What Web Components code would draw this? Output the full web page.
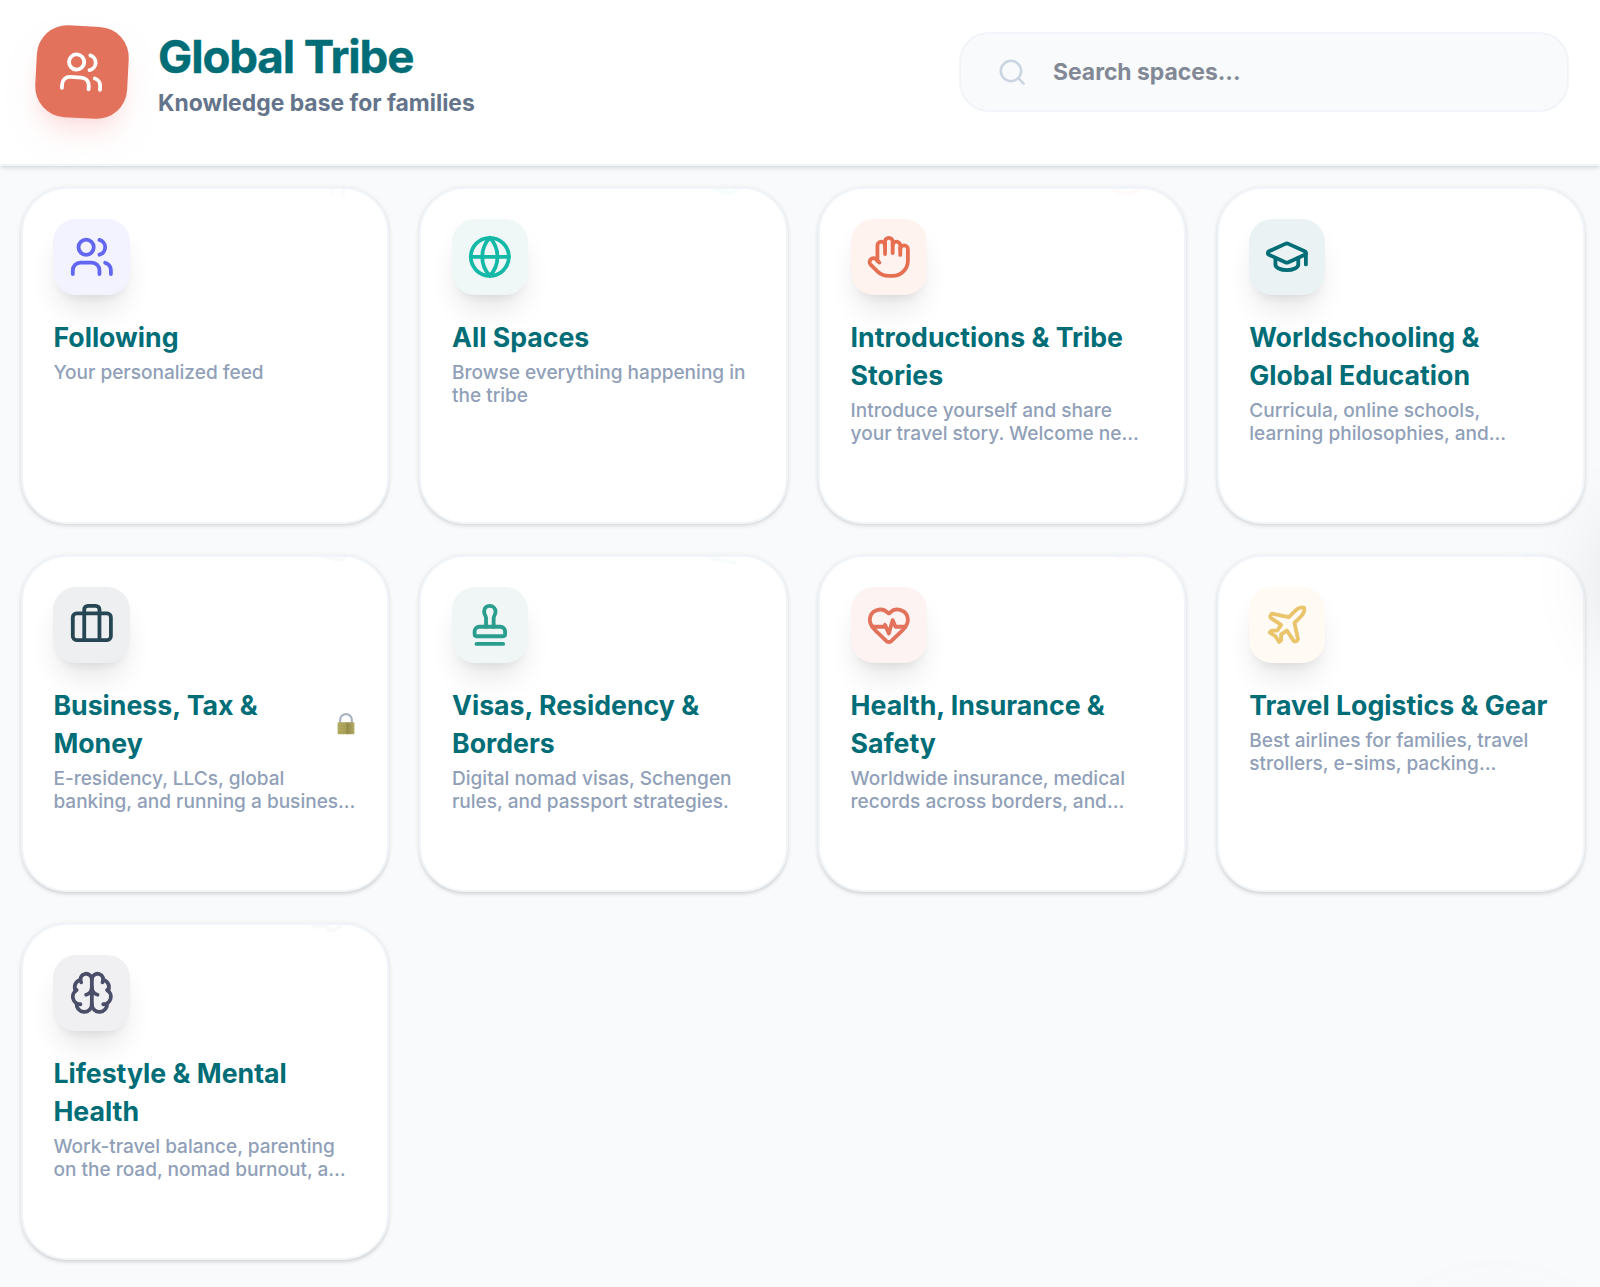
<!DOCTYPE html>
<html lang="en">
<head>
<meta charset="utf-8">
<title>Global Tribe</title>
<style>
  html, body {
    margin: 0;
    height: 100%;
    overflow: hidden;
    background: #f8fafc;
    font-family: Inter, "Liberation Sans", sans-serif;
  }
</style>
</head>
<body>
<tribe-app>
  <tribe-header slot="header" heading="Global Tribe" tagline="Knowledge base for families">
    <search-box>Search spaces...</search-box>
  </tribe-header>

  <space-card icon="users" color="#6366f1" tint="#f3f2ff" heading="Following">Your personalized feed</space-card>
  <space-card icon="globe" color="#14b8a6" tint="#eff8f7" heading="All Spaces">Browse everything happening in the tribe</space-card>
  <space-card icon="hand" color="#e76f51" tint="#fff3f0" heading="Introductions &amp; Tribe Stories">Introduce yourself and share your travel story. Welcome ne…</space-card>
  <space-card icon="cap" color="#006d77" tint="#ebf2f4" heading="Worldschooling &amp; Global Education">Curricula, online schools, learning philosophies, and…</space-card>
  <space-card icon="suitcase" color="#264653" tint="#eeeff1" heading="Business, Tax &amp; Money" locked>E-residency, LLCs, global banking, and running a busines…</space-card>
  <space-card icon="stamp" color="#2a9d8f" tint="#eff6f5" heading="Visas, Residency &amp; Borders">Digital nomad visas, Schengen rules, and passport strategies.</space-card>
  <space-card icon="heart" color="#e2725b" tint="#fcf3f2" heading="Health, Insurance &amp; Safety">Worldwide insurance, medical records across borders, and…</space-card>
  <space-card icon="plane" color="#e9c46a" tint="#fffaf3" heading="Travel Logistics &amp; Gear">Best airlines for families, travel strollers, e-sims, packing…</space-card>
  <space-card icon="brain" color="#4a4e69" tint="#f0f0f2" heading="Lifestyle &amp; Mental Health">Work-travel balance, parenting on the road, nomad burnout, a…</space-card>
</tribe-app>

<script>
const ICONS = {
  users: '<path d="M16 21v-2a4 4 0 0 0-4-4H6a4 4 0 0 0-4 4v2"/><circle cx="9" cy="7" r="4"/><path d="M22 21v-2a4 4 0 0 0-3-3.87"/><path d="M16 3.13a4 4 0 0 1 0 7.75"/>',
  globe: '<circle cx="12" cy="12" r="10"/><path d="M12 2a14.5 14.5 0 0 0 0 20 14.5 14.5 0 0 0 0-20"/><path d="M2 12h20"/>',
  hand: '<path d="M18 11V6a2 2 0 0 0-2-2a2 2 0 0 0-2 2"/><path d="M14 10V4a2 2 0 0 0-2-2a2 2 0 0 0-2 2v2"/><path d="M10 10.5V6a2 2 0 0 0-2-2a2 2 0 0 0-2 2v8"/><path d="M18 8a2 2 0 1 1 4 0v6a8 8 0 0 1-8 8h-2c-2.8 0-4.5-.86-5.99-2.34l-3.6-3.6a2 2 0 0 1 2.83-2.82L7 15"/>',
  cap: '<path d="M21.42 10.922a1 1 0 0 0-.019-1.838L12.83 5.18a2 2 0 0 0-1.66 0L2.6 9.08a1 1 0 0 0 0 1.832l8.57 3.908a2 2 0 0 0 1.66 0z"/><path d="M22 10v6"/><path d="M6 12.5V16a6 3 0 0 0 12 0v-3.5"/>',
  suitcase: '<path d="M16 20V4a2 2 0 0 0-2-2h-4a2 2 0 0 0-2 2v16"/><rect width="20" height="14" x="2" y="6" rx="2"/>',
  stamp: '<path d="M5 22h14"/><path d="M19.27 13.73A2.5 2.5 0 0 0 17.5 13h-11A2.5 2.5 0 0 0 4 15.5V17a1 1 0 0 0 1 1h14a1 1 0 0 0 1-1v-1.5c0-.66-.26-1.3-.73-1.77Z"/><path d="M14 13V8.5C14 7 15 7 15 5a3 3 0 0 0-3-3c-1.66 0-3 1-3 3s1 2 1 3.5V13"/>',
  heart: '<path d="M2 9.5a5.5 5.5 0 0 1 9.591-3.676.56.56 0 0 0 .818 0A5.49 5.49 0 0 1 22 9.5c0 2.29-1.5 4-3 5.5l-5.492 5.313a2 2 0 0 1-3 .019L5 15c-1.5-1.5-3-3.2-3-5.5"/><path d="M3.22 13H9.5l.5-1 2 4.5 2-7 1.5 3.5h5.27"/>',
  plane: '<path d="M17.8 19.2 16 11l3.5-3.5C21 6 21.5 4 21 3c-1-.5-3 0-4.5 1.5L13 8 4.8 6.2c-.5-.1-.9.1-1.1.5l-.3.5c-.2.5-.1 1 .3 1.3L9 12l-2 3H4l-1 1 3 2 2 3 1-1v-3l3-2 3.5 5.3c.3.4.8.5 1.3.2l.5-.2c.4-.3.6-.7.5-1.2z"/>',
  brain: '<path d="M12 18V5"/><path d="M15 13a4.17 4.17 0 0 1-3-4 4.17 4.17 0 0 1-3 4"/><path d="M17.598 6.5A3 3 0 1 0 12 5a3 3 0 1 0-5.598 1.5"/><path d="M17.997 5.125a4 4 0 0 1 2.526 5.77"/><path d="M18 18a4 4 0 0 0 2-7.464"/><path d="M19.967 17.483A4 4 0 1 1 12 18a4 4 0 1 1-7.967-.517"/><path d="M6 18a4 4 0 0 1-2-7.464"/><path d="M6.003 5.125a4 4 0 0 0-2.526 5.77"/>',
  search: '<circle cx="11" cy="11" r="8"/><path d="m21 21-4.3-4.3"/>'
};

class LineIcon extends HTMLElement {
  constructor() {
    super();
    this.attachShadow({ mode: 'open' });
  }

  connectedCallback() {
    this.shadowRoot.innerHTML = `
      <style>
        :host {
          display: block;
          width: var(--icon-size, 45.7px);
          height: var(--icon-size, 45.7px);
        }

        svg {
          display: block;
          width: 100%;
          height: 100%;
        }
      </style>
      <svg viewBox="0 0 24 24" fill="none" stroke="currentColor" stroke-width="2" stroke-linecap="round" stroke-linejoin="round">${ICONS[this.getAttribute('name')]}</svg>
    `;
  }
}

class SearchBox extends HTMLElement {
  constructor() {
    super();
    this.attachShadow({ mode: 'open' });
  }

  connectedCallback() {
    this.shadowRoot.innerHTML = `
      <style>
        :host {
          display: flex;
          align-items: center;
          gap: 25.5px;
          box-sizing: border-box;
          width: 610px;
          height: 80px;
          padding-left: 36px;
          border: 2px solid #f1f5f9;
          border-radius: 30px;
          background: #f8fafc;
          color: #828895;
          font-size: 22.9px;
          font-weight: 700;
        }

        line-icon {
          --icon-size: 30.5px;
          color: #cbd5e1;
        }
      </style>
      <line-icon name="search"></line-icon>
      <span><slot></slot></span>
    `;
  }
}

class TribeHeader extends HTMLElement {
  constructor() {
    super();
    this.attachShadow({ mode: 'open' });
  }

  connectedCallback() {
    this.shadowRoot.innerHTML = `
      <style>
        :host {
          display: flex;
          align-items: flex-start;
          justify-content: space-between;
          box-sizing: border-box;
          height: 166px;
          padding: 26.4px 31px 0 36px;
          background: #fff;
          border-bottom: 2px solid #f1f5f9;
          box-shadow: 0 1.9px 5.7px rgba(0, 0, 0, .1), 0 1.9px 3.8px -1.9px rgba(0, 0, 0, .1);
        }

        .brand,
        .tools {
          display: flex;
          align-items: center;
          height: 91.5px;
        }

        .brand {
          gap: 30.5px;
        }

        .logo {
          display: grid;
          place-items: center;
          width: 91.5px;
          height: 91.5px;
          border-radius: 30.5px;
          background: #e2725b;
          color: #fff;
          transform: rotate(3deg);
          box-shadow: 0 19px 28.6px -5.7px rgba(254, 202, 202, .5), 0 7.6px 11.4px -7.6px rgba(254, 202, 202, .5);
        }

        .text {
          padding-top: 8px;
        }

        h1 {
          margin: 0;
          color: #006d77;
          font-size: 45.7px;
          line-height: 45.7px;
          font-weight: 700;
          letter-spacing: -1.14px;
          -webkit-text-stroke: .4px #006d77;
        }

        p {
          margin: 7.6px 0 0;
          color: #64748b;
          font-size: 22.9px;
          line-height: 30.5px;
          font-weight: 700;
        }
      </style>
      <div class="brand">
        <div class="logo"><line-icon name="users"></line-icon></div>
        <div class="text">
          <h1>${this.getAttribute('heading')}</h1>
          <p>${this.getAttribute('tagline')}</p>
        </div>
      </div>
      <div class="tools"><slot></slot></div>
    `;
  }
}

class SpaceCard extends HTMLElement {
  constructor() {
    super();
    this.attachShadow({ mode: 'open' });
  }

  connectedCallback() {
    const icon = this.getAttribute('icon');
    const lock = `
      <svg class="lock" viewBox="0 0 18 22">
        <defs>
          <linearGradient id="brass">
            <stop offset="0" stop-color="#b4ae63"/>
            <stop offset=".5" stop-color="#aaa158"/>
            <stop offset=".55" stop-color="#938a48"/>
            <stop offset="1" stop-color="#b5ad68"/>
          </linearGradient>
        </defs>
        <path d="M3.2 10V6.6a5.8 5.4 0 0 1 11.6 0V10" fill="none" stroke="#a9b4c2" stroke-width="2.2"/>
        <rect x=".6" y="9.3" width="16.8" height="12" rx=".8" fill="url(#brass)"/>
        <path d="M1 13h16M1 16h16M1 19h16" stroke="#8c8444" stroke-width=".5" opacity=".5"/>
      </svg>`;

    this.shadowRoot.innerHTML = `
      <style>
        :host {
          display: block;
          position: relative;
          box-sizing: border-box;
          padding: 30.5px;
          border: 2px solid #f1f5f9;
          border-radius: 45.7px;
          background: #fff;
          overflow: hidden;
          box-shadow: 0 1.9px 5.7px rgba(0, 0, 0, .1), 0 1.9px 3.8px -1.9px rgba(0, 0, 0, .1);
        }

        /* faint echo of the icon, cut off by the top edge */
        .echo {
          position: absolute;
          top: -37.5px;
          right: 36.8px;
          color: ${this.getAttribute('color')};
          opacity: .03;
          transform: rotate(12deg);
        }

        .badge {
          display: grid;
          place-items: center;
          width: 76.2px;
          height: 76.2px;
          margin-bottom: 22.9px;
          border-radius: 22.9px;
          color: ${this.getAttribute('color')};
          background: ${this.getAttribute('tint')};
          box-shadow: 0 19px 28.6px -5.7px rgba(0, 0, 0, .1), 0 7.6px 11.4px -7.6px rgba(0, 0, 0, .1);
        }

        .head {
          display: flex;
          align-items: center;
          justify-content: space-between;
        }

        h3 {
          margin: 0;
          color: #006d77;
          font-size: 26.7px;
          line-height: 38.1px;
          font-weight: 700;
        }

        .lock {
          flex: none;
          width: 18px;
          height: 22px;
          margin-right: 1.5px;
        }

        p {
          display: -webkit-box;
          -webkit-line-clamp: 2;
          -webkit-box-orient: vertical;
          overflow: hidden;
          margin: 4.2px 0 0;
          color: #90a0b8;
          font-size: 19.06px;
          line-height: 23.8px;
          font-weight: 500;
        }
      </style>
      <line-icon class="echo" name="${icon}"></line-icon>
      <div class="badge"><line-icon name="${icon}"></line-icon></div>
      <div class="head">
        <h3></h3>
        ${this.hasAttribute('locked') ? lock : ''}
      </div>
      <p><slot></slot></p>
    `;
    this.shadowRoot.querySelector('h3').textContent = this.getAttribute('heading');
  }
}

class TribeApp extends HTMLElement {
  constructor() {
    super();
    this.attachShadow({ mode: 'open' });
  }

  connectedCallback() {
    this.shadowRoot.innerHTML = `
      <style>
        :host {
          display: block;
          position: relative;
          height: 100%;
          overflow: hidden;
        }

        main {
          display: grid;
          grid-template-columns: repeat(4, 1fr);
          grid-auto-rows: 337.5px;
          gap: 30.5px;
          padding: 20.7px 15.2px 0 20.9px;
        }

        /* shadow of the drawer handle that sits past the right edge */
        .handle {
          position: absolute;
          top: 488px;
          right: -96px;
          width: 90px;
          height: 134px;
          border-radius: 45px;
          box-shadow: 0 24px 80px rgba(0, 0, 0, .1);
        }

        .glow {
          position: absolute;
          left: 1356px;
          top: 1258px;
          width: 278px;
          height: 278px;
          border-radius: 50%;
          background: radial-gradient(circle, #f7f9fb 120px, #f8fafc 128px, #f8f9fb 131px, #f8f9fb 138px, transparent 139px);
        }
      </style>
      <slot name="header"></slot>
      <main><slot></slot></main>
      <div class="handle"></div>
      <div class="glow"></div>
    `;
  }
}

customElements.define('line-icon', LineIcon);
customElements.define('search-box', SearchBox);
customElements.define('tribe-header', TribeHeader);
customElements.define('space-card', SpaceCard);
customElements.define('tribe-app', TribeApp);
</script>
</body>
</html>
